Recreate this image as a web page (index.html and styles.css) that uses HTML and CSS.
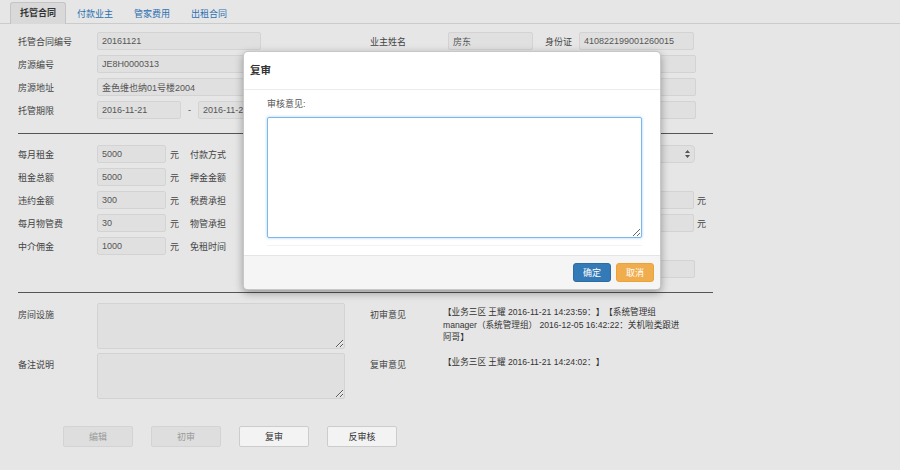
FILE: index.html
```html
<!DOCTYPE html>
<html lang="zh-CN">
<head>
<meta charset="utf-8">
<title>托管合同</title>
<link rel="stylesheet" href="styles.css">
</head>
<body>
<div class="tabs">
  <div class="tab active">托管合同</div>
  <div class="tab">付款业主</div>
  <div class="tab">管家费用</div>
  <div class="tab">出租合同</div>
</div>

<div class="form">
  <div class="rows">
    <div class="row">
      <div class="left">
        <span class="lbl">托管合同编号</span>
        <input class="inp w164" type="text" readonly value="20161121">
      </div>
      <div class="right">
        <span class="rlbl">业主姓名</span>
        <input class="inp w85" type="text" readonly value="房东">
        <span class="lbl-id">身份证</span>
        <input class="inp w115" type="text" readonly value="410822199001260015">
      </div>
    </div>
    <div class="row">
      <div class="left">
        <span class="lbl">房源编号</span>
        <input class="inp w164" type="text" readonly value="JE8H0000313">
      </div>
      <div class="right">
        <span class="rlbl">联系电话</span>
        <input class="inp w85" type="text" readonly value="">
        <span class="lbl-id">银行</span>
        <input class="inp w117" type="text" readonly value="">
      </div>
    </div>
    <div class="row">
      <div class="left">
        <span class="lbl">房源地址</span>
        <input class="inp w164" type="text" readonly value="金色维也纳01号楼2004">
      </div>
      <div class="right">
        <span class="rlbl">开户名</span>
        <input class="inp w85" type="text" readonly value="">
        <span class="lbl-id">账号</span>
        <input class="inp w117" type="text" readonly value="">
      </div>
    </div>
    <div class="row">
      <div class="left">
        <span class="lbl">托管期限</span>
        <input class="inp w84" type="text" readonly value="2016-11-21">
        <span class="dash">-</span>
        <input class="inp w84" type="text" readonly value="2016-11-21">
      </div>
      <div class="right">
        <span class="rlbl">签约日期</span>
        <input class="inp w85" type="text" readonly value="">
        <span class="lbl-id">管家</span>
        <input class="inp w117" type="text" readonly value="">
      </div>
    </div>
  </div>

  <div class="sep"></div>

  <div class="rows">
    <div class="row">
      <div class="left">
        <span class="lbl">每月租金</span>
        <input class="inp w69" type="text" readonly value="5000">
        <span class="unit">元</span>
        <span class="lbl2">付款方式</span>
        <input class="inp w90" type="text" readonly value="押一付三">
      </div>
      <div class="right">
        <span class="rlbl">付款日</span>
        <div class="select w247">
          <span>每月1日</span>
          <svg class="arrows" width="5" height="8" viewBox="0 0 5 8"><path d="M2.5 0 L5 3 L0 3 Z M2.5 8 L5 5 L0 5 Z" fill="#555"/></svg>
        </div>
      </div>
    </div>
    <div class="row">
      <div class="left">
        <span class="lbl">租金总额</span>
        <input class="inp w69" type="text" readonly value="5000">
        <span class="unit">元</span>
        <span class="lbl2">押金金额</span>
        <input class="inp w90" type="text" readonly value="5000">
      </div>
      <div class="right"></div>
    </div>
    <div class="row">
      <div class="left">
        <span class="lbl">违约金额</span>
        <input class="inp w69" type="text" readonly value="300">
        <span class="unit">元</span>
        <span class="lbl2">税费承担</span>
        <input class="inp w90" type="text" readonly value="业主">
      </div>
      <div class="right">
        <span class="rlbl">税费金额</span>
        <input class="inp w246" type="text" readonly value="">
        <span class="unit-r">元</span>
      </div>
    </div>
    <div class="row">
      <div class="left">
        <span class="lbl">每月物管费</span>
        <input class="inp w69" type="text" readonly value="30">
        <span class="unit">元</span>
        <span class="lbl2">物管承担</span>
        <input class="inp w90" type="text" readonly value="业主">
      </div>
      <div class="right">
        <span class="rlbl">物管金额</span>
        <input class="inp w246" type="text" readonly value="">
        <span class="unit-r">元</span>
      </div>
    </div>
    <div class="row">
      <div class="left">
        <span class="lbl">中介佣金</span>
        <input class="inp w69" type="text" readonly value="1000">
        <span class="unit">元</span>
        <span class="lbl2">免租时间</span>
        <input class="inp w90" type="text" readonly value="">
      </div>
      <div class="right"></div>
    </div>
    <div class="row">
      <div class="left"></div>
      <div class="right">
        <span class="rlbl">免租说明</span>
        <input class="inp w247" type="text" readonly value="">
      </div>
    </div>
  </div>

  <div class="sep sep2"></div>

  <div class="notes">
    <div class="note-row">
      <div class="left">
        <span class="lbl top">房间设施</span>
        <textarea class="ta" readonly></textarea>
      </div>
      <div class="right top-r">
        <span class="rlbl3">初审意见</span>
        <div class="opinion">【业务三区 王耀 2016-11-21 14:23:59：】【系统管理组manager（系统管理组） 2016-12-05 16:42:22：关机啦类跟进阿哥】</div>
      </div>
    </div>
    <div class="note-row">
      <div class="left">
        <span class="lbl top">备注说明</span>
        <textarea class="ta" readonly></textarea>
      </div>
      <div class="right top-r">
        <span class="rlbl3">复审意见</span>
        <div class="opinion">【业务三区 王耀 2016-11-21 14:24:02：】</div>
      </div>
    </div>
  </div>

  <div class="actions">
    <button class="btn" disabled>编辑</button>
    <button class="btn" disabled>初审</button>
    <button class="btn">复审</button>
    <button class="btn">反审核</button>
  </div>
</div>

<div class="modal">
  <div class="modal-header">复审</div>
  <div class="modal-body">
    <div class="mb-inner">
      <div class="mlabel">审核意见:</div>
      <textarea class="mta"></textarea>
    </div>
  </div>
  <div class="modal-footer">
    <button class="mbtn primary">确定</button>
    <button class="mbtn warning">取消</button>
  </div>
</div>
</body>
</html>
```

FILE: styles.css
```css
html, body {
  margin: 0;
  padding: 0;
}

body {
  width: 900px;
  height: 470px;
  overflow: hidden;
  position: relative;
  background: #e6e6e6;
  font-family: "Liberation Sans", "Noto Sans CJK SC", sans-serif;
  font-size: 9px;
  color: #444;
  text-spacing-trim: space-all;
}

/* tabs */
.tabs {
  display: flex;
  align-items: flex-end;
  height: 23px;
  padding-left: 10px;
  border-bottom: 1px solid #cbcbcb;
}

.tab {
  height: 20px;
  line-height: 20px;
  padding: 0 9px;
  margin-right: 1px;
  margin-bottom: -1px;
  border: 1px solid transparent;
  border-bottom: 0;
  border-radius: 3px 3px 0 0;
  color: #2b6fb1;
}

.tab.active {
  background: #d9d9d9;
  border-color: #c4c4c4;
  color: #333;
  font-weight: bold;
  height: 21px;
}

/* form */
.form {
  width: 695px;
  padding: 8px 0 0 18px;
}

.rows {
  display: flex;
  flex-direction: column;
  gap: 5px;
}

.row {
  display: flex;
  align-items: center;
  height: 18px;
}

.left {
  width: 352px;
  flex: none;
  display: flex;
  align-items: center;
  overflow: hidden;
}

.right {
  display: flex;
  align-items: center;
}

.lbl {
  width: 79px;
  flex: none;
}

.rlbl {
  width: 78px;
  flex: none;
}

.lbl-id {
  width: 34px;
  margin-left: 12px;
  flex: none;
}

.lbl2 {
  width: 56px;
  flex: none;
}

.unit {
  width: 9px;
  margin: 0 11px 0 4px;
  flex: none;
}

.unit-r {
  margin-left: 3px;
}

.dash {
  width: 17px;
  text-align: center;
  flex: none;
}

.inp {
  box-sizing: border-box;
  height: 18px;
  margin: 0;
  padding: 0 4px;
  border: 1px solid #d3d3d3;
  border-radius: 2px;
  background: #e0e0e0;
  font: inherit;
  color: #555;
  outline: none;
  flex: none;
}

.w69 { width: 69px; }
.w84 { width: 84px; }
.w85 { width: 85px; }
.w90 { width: 90px; }
.w115 { width: 115px; }
.w117 { width: 117px; }
.w164 { width: 164px; }
.w246 { width: 246px; }
.w247 { width: 247px; }

.select {
  box-sizing: border-box;
  height: 18px;
  display: flex;
  align-items: center;
  justify-content: space-between;
  padding: 0 4px 0 5px;
  border: 1px solid #d3d3d3;
  border-radius: 4px;
  background: #e0e0e0;
  color: #555;
}

.arrows {
  display: block;
}

.sep {
  height: 1px;
  background: #555;
  margin: 14px 0 11px;
}

.sep2 {
  margin: 14px 0 10px;
}

/* notes */
.notes {
  display: flex;
  flex-direction: column;
  gap: 4px;
}

.note-row {
  display: flex;
  height: 46px;
}

.note-row .left {
  align-items: flex-start;
}

.lbl.top {
  padding-top: 5px;
}

.ta {
  box-sizing: border-box;
  width: 248px;
  height: 46px;
  margin: 0;
  border: 1px solid #d3d3d3;
  border-radius: 2px;
  background: #e0e0e0;
  resize: vertical;
  outline: none;
  flex: none;
}

.top-r {
  align-items: flex-start;
}

.rlbl3 {
  width: 73px;
  flex: none;
  padding-top: 5px;
}

.opinion {
  width: 242px;
  padding-top: 3px;
  font-size: 8.6px;
  line-height: 12.5px;
  color: #333;
}

/* actions */
.actions {
  display: flex;
  gap: 18px;
  margin: 27px 0 0 45px;
}

.btn {
  width: 70px;
  height: 21px;
  padding: 0;
  margin: 0;
  border: 1px solid #cccccc;
  border-radius: 2px;
  background: #f3f3f3;
  font: inherit;
  color: #333;
}

.btn:disabled {
  background: #dedede;
  border-color: #d3d3d3;
  color: #9a9a9a;
}

/* modal */
.modal {
  position: absolute;
  left: 243px;
  top: 51px;
  width: 418px;
  height: 239px;
  box-sizing: border-box;
  display: flex;
  flex-direction: column;
  background: #fff;
  border: 1px solid rgba(0, 0, 0, 0.22);
  border-radius: 5px;
  box-shadow: 0 3px 9px rgba(0, 0, 0, 0.35);
  overflow: hidden;
}

.modal-header {
  box-sizing: border-box;
  height: 38px;
  line-height: 37px;
  padding-left: 6px;
  border-bottom: 1px solid #ececec;
  font-size: 10.5px;
  font-weight: bold;
  color: #333;
  flex: none;
}

.modal-body {
  box-sizing: border-box;
  height: 165px;
  padding: 8px 18px 0 23px;
  flex: none;
}

.mb-inner {
  padding-bottom: 7px;
  border-bottom: 1px solid #f3f3f3;
}

.mlabel {
  line-height: 12px;
  color: #555;
}

.mta {
  display: block;
  box-sizing: border-box;
  width: 100%;
  height: 121px;
  margin: 7px 0 0;
  border: 1px solid #7db8ea;
  border-radius: 2px;
  box-shadow: 0 0 3px rgba(102, 175, 233, 0.6);
  outline: none;
  resize: vertical;
  background: #fff;
}

.modal-footer {
  box-sizing: border-box;
  height: 34px;
  display: flex;
  align-items: center;
  justify-content: flex-end;
  gap: 5px;
  padding-right: 6px;
  border-top: 1px solid #e5e5e5;
  background: #f5f5f5;
  flex: none;
}

.mbtn {
  width: 38px;
  height: 19px;
  padding: 0;
  margin: 0;
  border: 1px solid transparent;
  border-radius: 3px;
  font: inherit;
  color: #fff;
}

.mbtn.primary {
  background: #337ab7;
  border-color: #2e6da4;
}

.mbtn.warning {
  background: #f0ad4e;
  border-color: #eea236;
}
```
